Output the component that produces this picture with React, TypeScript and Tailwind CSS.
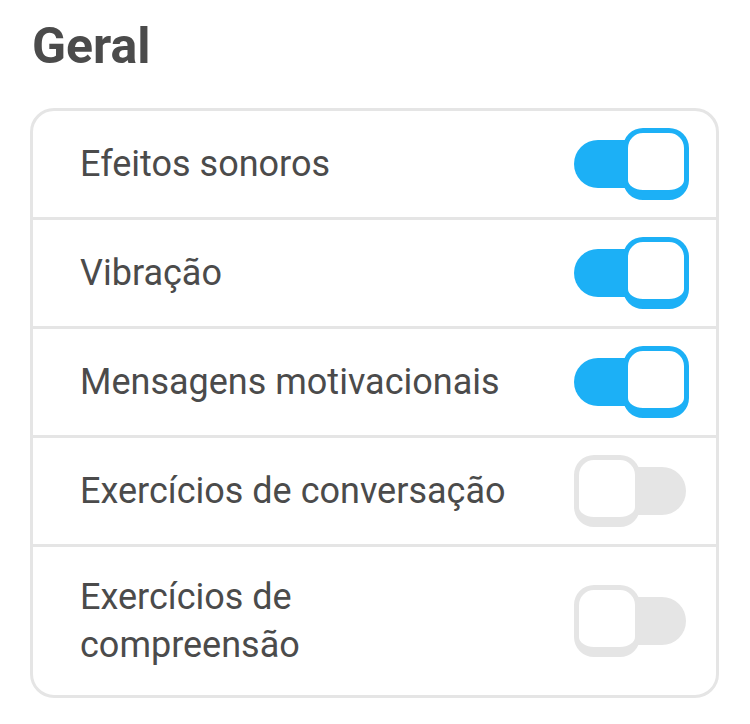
import React, { useState } from 'react';

interface Setting {
  id: string;
  label: string;
  on: boolean;
}

const SETTINGS: Setting[] = [
  { id: 'sound', label: 'Efeitos sonoros', on: true },
  { id: 'vibration', label: 'Vibração', on: true },
  { id: 'motivation', label: 'Mensagens motivacionais', on: true },
  { id: 'speaking', label: 'Exercícios de conversação', on: false },
  { id: 'listening', label: 'Exercícios de compreensão', on: false },
];

const Toggle: React.FC<{ on: boolean; onClick: () => void }> = ({ on, onClick }) => (
  <button
    type="button"
    onClick={onClick}
    className="relative w-[115px] h-[72px] shrink-0 flex items-center"
  >
    {/* Track */}
    <span
      className={`absolute left-0 top-[12px] w-[112px] h-[48px] rounded-full ${
        on ? 'bg-[#1cb0f6]' : 'bg-[#e5e5e5]'
      }`}
    ></span>
    {/* Knob */}
    <span
      className={`absolute top-0 w-[66px] h-[72px] rounded-[20px] bg-white border-[5px] border-b-[10px] ${
        on ? 'right-0 border-[#1cb0f6]' : 'left-0 border-[#e5e5e5]'
      }`}
    ></span>
  </button>
);

export default function App() {
  const [settings, setSettings] = useState(SETTINGS);

  const toggle = (id: string) => {
    setSettings((prev) => prev.map((s) => (s.id === id ? { ...s, on: !s.on } : s)));
  };

  return (
    <div className="w-[750px] min-h-[724px] bg-white pt-[22px] font-['Roboto',sans-serif] text-[#4b4b4b]">
      <h2 className="ml-[32px] mb-[38px] text-[50px] leading-[48px] font-bold">Geral</h2>

      <div className="ml-[30px] w-[689px] border-[3px] border-[#e5e5e5] rounded-[24px]">
        {settings.map((s, idx) => (
          <div
            key={s.id}
            className={`flex items-center justify-between pl-[47px] pr-[27px] py-[17px] ${
              idx > 0 ? 'border-t-[3px] border-[#e5e5e5]' : ''
            }`}
          >
            <p className="text-[36px] leading-[48px] py-[9px] max-w-[436px]">{s.label}</p>
            <Toggle on={s.on} onClick={() => toggle(s.id)} />
          </div>
        ))}
      </div>
    </div>
  );
}
